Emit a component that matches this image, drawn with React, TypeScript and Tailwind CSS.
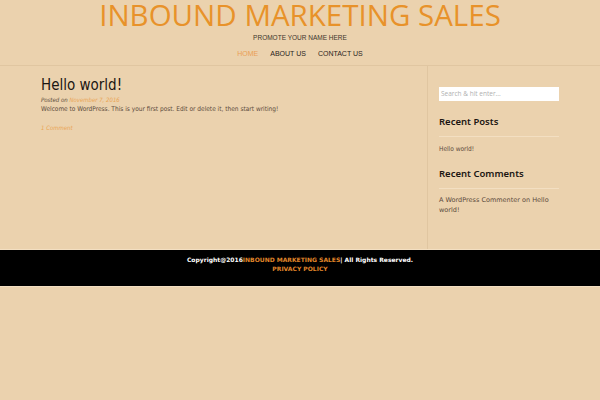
export default function App() {
  const cond = { fontFamily: '"DejaVu Sans Condensed", "DejaVu Sans", sans-serif' };
  return (
    <div className="w-[600px] h-[400px] bg-[#ebd2ae] overflow-hidden" style={cond}>
      <header className="flex flex-col items-center h-[66px] border-b border-[#e0c6a1]">
        <h1 className="text-[29.5px] leading-[30px] text-[#e8922a]" style={{ fontFamily: '"Open Sans", sans-serif' }}>INBOUND MARKETING SALES</h1>
        <div className="text-[6.5px] leading-[8px] mt-[4px] text-[#3d352c] uppercase" style={{ fontFamily: '"Liberation Sans", sans-serif' }}>Promote your name here</div>
        <nav className="flex items-center gap-[12px] mt-[8px] text-[7px] leading-[8px]" style={{ fontFamily: '"Liberation Sans", sans-serif' }}>
          <span className="text-[#eaa055]">HOME</span>
          <span className="text-[#2a2320]">ABOUT US</span>
          <span className="text-[#2a2320]">CONTACT US</span>
        </nav>
      </header>
      <div className="flex h-[184px] border-b border-[#f3dfc2]">
        <main className="w-[428px] border-r border-[#e0c6a1] pl-[41px] pt-[9px]">
          <h2 className="text-[15px] leading-[20px] text-[#1b1612]">Hello world!</h2>
          <div className="text-[6px] leading-[8px] mt-[1px] italic text-[#5a4a3a]">
            Posted on <span className="text-[#eaa555]">November 7, 2016</span>
          </div>
          <p className="text-[6.5px] leading-[9px] mt-[1px] text-[#5b4a3c]">Welcome to WordPress. This is your first post. Edit or delete it, then start writing!</p>
          <div className="text-[6px] leading-[8px] mt-[10px] italic text-[#eaa555]">1 Comment</div>
        </main>
        <aside className="flex-1 pl-[11px] pr-[41px] pt-[21px]">
          <div className="h-[14px] bg-white flex items-center px-[2px] text-[6.5px] text-[#b0b0b0]" style={{ fontFamily: '"Open Sans", sans-serif' }}>Search &amp; hit enter...</div>
          <h3 className="mt-[15px] text-[9.5px] leading-[12px] text-[#1b1612] font-semibold" style={{ fontFamily: '"Noto Sans", sans-serif' }}>Recent Posts</h3>
          <div className="mt-[8px] border-t border-[#f3dfc2]"></div>
          <div className="mt-[7px] text-[6.5px] leading-[10px] text-[#5b4a3c]">Hello world!</div>
          <h3 className="mt-[14px] text-[9.5px] leading-[12px] text-[#1b1612] font-semibold" style={{ fontFamily: '"Noto Sans", sans-serif' }}>Recent Comments</h3>
          <div className="mt-[8px] border-t border-[#f3dfc2]"></div>
          <div className="mt-[7px] text-[6.5px] leading-[9.5px] text-[#5b4a3c]" style={{ fontFamily: '"DejaVu Sans", sans-serif' }}>A WordPress Commenter on Hello world!</div>
        </aside>
      </div>
      <footer className="h-[36px] bg-black flex flex-col items-center pt-[5px] text-[6px] leading-[9px] font-bold" style={{ fontFamily: '"DejaVu Sans", sans-serif' }}>
        <div className="text-white">Copyright@2016<span className="text-[#e0862a]">INBOUND MARKETING SALES</span>| All Rights Reserved.</div>
        <div className="text-[#e0862a]">PRIVACY POLICY</div>
      </footer>
      <div className="border-t border-[#f3dfc2]"></div>
    </div>
  );
}
